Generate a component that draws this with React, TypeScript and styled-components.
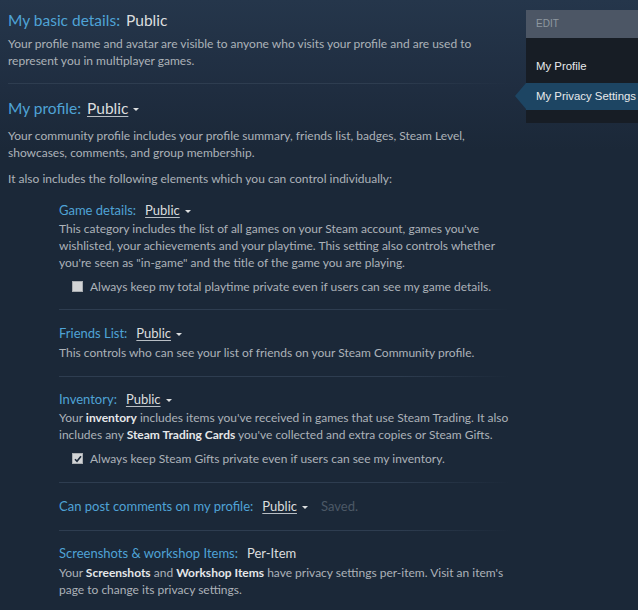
import React from 'react';
import styled, { createGlobalStyle } from 'styled-components';

const GlobalStyle = createGlobalStyle`
  html, body {
    margin: 0;
    padding: 0;
    background: #1b2838;
  }
  body {
    font-family: Lato, "Liberation Sans", sans-serif;
    min-height: 610px;
    background: linear-gradient(180deg, #25364b 0px, #1f2d40 90px, #1b2838 150px) no-repeat, #1b2838;
    overflow: hidden;
  }
`;

const Page = styled.div`
  display: flex;
  align-items: flex-start;
  width: 638px;
  overflow: hidden;
`;

const Main = styled.div`
  width: 502px;
  padding-left: 8px;
  flex-shrink: 0;
`;

const Section = styled.div<{ $indent?: boolean }>`
  padding: ${p => (p.$indent ? '0 0 0 51px' : '0')};
`;

const Heading = styled.div<{ $small?: boolean; $mb?: number }>`
  display: flex;
  align-items: baseline;
  gap: ${p => (p.$small ? '9px' : '6px')};
  color: #4fa3d6;
  font-size: ${p => (p.$small ? '13px' : '15.5px')};
  line-height: ${p => (p.$small ? '18px' : '22px')};
  margin-bottom: ${p => (p.$mb ?? 1)}px;
`;

const Value = styled.span`
  color: #dcdedf;
`;

const Dropdown = styled.span`
  display: inline-flex;
  align-items: center;
  gap: 5px;
  color: #dcdedf;

  u {
    text-decoration: underline;
    text-decoration-color: #b8bec4;
    text-underline-offset: 2px;
  }
`;

const Caret = styled.span`
  display: inline-block;
  width: 0;
  height: 0;
  border-left: 3px solid transparent;
  border-right: 3px solid transparent;
  border-top: 3px solid #dcdedf;
  margin-top: 2px;
`;

const Saved = styled.span`
  color: #4c5866;
  margin-left: 4px;
`;

const Desc = styled.p`
  margin: 0;
  color: #acb2b8;
  font-size: 12px;
  line-height: 17px;

  b {
    color: #e5e7e9;
    font-weight: bold;
  }
`;

const Spacer = styled.div<{ $h: number }>`
  height: ${p => p.$h}px;
`;

const Divider = styled.div`
  height: 1px;
  background: linear-gradient(90deg, #2e3d50 0%, #2e3d50 75%, rgba(46, 61, 80, 0) 100%);
`;

const CheckRow = styled.label`
  display: flex;
  align-items: center;
  gap: 7px;
  padding-left: 13px;
  color: #acb2b8;
  font-size: 12px;
  line-height: 17px;
`;

const Box = styled.span`
  width: 9px;
  height: 9px;
  background: #d2d4d6;
  border: 1px solid #a8acb0;
  display: flex;
  align-items: center;
  justify-content: center;
  flex-shrink: 0;
`;

const Side = styled.div`
  margin-top: 10px;
  margin-left: 16px;
  width: 130px;
  background: #171d25;
  padding-bottom: 13px;
  flex-shrink: 0;
`;

const SideHead = styled.div`
  background: #4c5665;
  height: 28px;
  line-height: 28px;
  padding-left: 10px;
  color: #8f98a0;
  font-family: "Liberation Sans", Arial, sans-serif;
  font-size: 10px;
  text-transform: uppercase;
`;

const SideList = styled.div`
  display: flex;
  flex-direction: column;
  gap: 3px;
  padding-top: 15px;
`;

const SideItem = styled.div<{ $active?: boolean }>`
  position: relative;
  height: 27px;
  line-height: 27px;
  padding-left: 10px;
  white-space: nowrap;
  color: #e8eaec;
  font-family: "Liberation Sans", Arial, sans-serif;
  font-size: 11.4px;
  background: ${p => (p.$active ? '#1d4563' : 'transparent')};

  &::before {
    content: '';
    display: ${p => (p.$active ? 'block' : 'none')};
    position: absolute;
    left: -11px;
    top: 0;
    border-top: 13.5px solid transparent;
    border-bottom: 13.5px solid transparent;
    border-right: 11px solid #1d4563;
  }
`;

const Check = () => (
  <svg width="8" height="8" viewBox="0 0 8 8">
    <path d="M1 4.2 L3 6.3 L7 1.2" fill="none" stroke="#1b2838" strokeWidth="1.6" />
  </svg>
);

const Checkbox: React.FC<{ checked?: boolean; children: React.ReactNode }> = ({ checked, children }) => (
  <CheckRow>
    <Box>{checked && <Check />}</Box>
    {children}
  </CheckRow>
);

const Select: React.FC<{ value: string }> = ({ value }) => (
  <Dropdown>
    <u>{value}</u>
    <Caret />
  </Dropdown>
);

const App: React.FC = () => (
  <>
    <GlobalStyle />
    <Page>
      <Main>
        <Spacer $h={9} />
        <Section>
          <Heading $mb={4}>
            My basic details: <Value>Public</Value>
          </Heading>
          <Desc>
            Your profile name and avatar are visible to anyone who visits your profile and are used to
            represent you in multiplayer games.
          </Desc>
        </Section>
        <Spacer $h={14} />
        <Divider />
        <Spacer $h={13} />
        <Section>
          <Heading $mb={8}>
            My profile: <Select value="Public" />
          </Heading>
          <Desc>
            Your community profile includes your profile summary, friends list, badges, Steam Level,
            showcases, comments, and group membership.
          </Desc>
          <Spacer $h={9} />
          <Desc>It also includes the following elements which you can control individually:</Desc>
        </Section>
        <Spacer $h={14} />
        <Section $indent>
          <Heading $small>
            Game details: <Select value="Public" />
          </Heading>
          <Desc>
            This category includes the list of all games on your Steam account, games you've
            wishlisted, your achievements and your playtime. This setting also controls whether
            you're seen as "in-game" and the title of the game you are playing.
          </Desc>
          <Spacer $h={7} />
          <Checkbox>Always keep my total playtime private even if users can see my game details.</Checkbox>
          <Spacer $h={14} />
          <Divider />
          <Spacer $h={14} />
          <Heading $small $mb={2}>
            Friends List: <Select value="Public" />
          </Heading>
          <Desc>This controls who can see your list of friends on your Steam Community profile.</Desc>
          <Spacer $h={15} />
          <Divider />
          <Spacer $h={13} />
          <Heading $small>
            Inventory: <Select value="Public" />
          </Heading>
          <Desc>
            Your <b>inventory</b> includes items you've received in games that use Steam Trading. It also
            includes any <b>Steam Trading Cards</b> you've collected and extra copies or Steam Gifts.
          </Desc>
          <Spacer $h={7} />
          <Checkbox checked>Always keep Steam Gifts private even if users can see my inventory.</Checkbox>
          <Spacer $h={15} />
          <Divider />
          <Spacer $h={14} />
          <Heading $small>
            Can post comments on my profile: <Select value="Public" />
            <Saved>Saved.</Saved>
          </Heading>
          <Spacer $h={14} />
          <Divider />
          <Spacer $h={13} />
          <Heading $small $mb={2}>
            Screenshots &amp; workshop Items: <Value>Per-Item</Value>
          </Heading>
          <Desc>
            Your <b>Screenshots</b> and <b>Workshop Items</b> have privacy settings per-item. Visit an item's
            page to change its privacy settings.
          </Desc>
        </Section>
      </Main>
      <Side>
        <SideHead>Edit</SideHead>
        <SideList>
          <SideItem>My Profile</SideItem>
          <SideItem $active>My Privacy Settings</SideItem>
        </SideList>
      </Side>
    </Page>
  </>
);

export default App;
